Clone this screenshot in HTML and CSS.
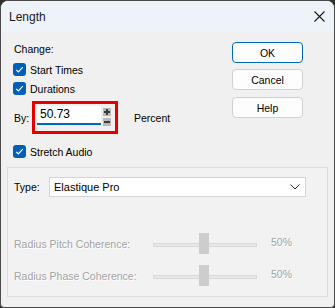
FILE: index.html
```html
<!DOCTYPE html>
<html lang="en">
<head>
  <meta charset="UTF-8">
  <title>Length</title>
  <link rel="stylesheet" href="styles.css">
</head>
<body>
  <div class="window">
    <div class="titlebar">
      <span class="title">Length</span>
      <svg class="close" width="11" height="11" viewBox="0 0 11 11">
        <path d="M0.5 0.5 L10.5 10.5 M10.5 0.5 L0.5 10.5" stroke="#1a1a1a" stroke-width="1.1" fill="none"/>
      </svg>
    </div>

    <div class="top">
      <div class="left">
        <div class="heading">Change:</div>
        <label class="check">
          <svg class="box" width="13" height="13" viewBox="0 0 13 13">
            <rect width="13" height="13" rx="3" fill="#005fb8"/>
            <path d="M3.2 6.8 L5.4 9 L9.8 4.2" stroke="#fff" stroke-width="1.2" fill="none"/>
          </svg>
          Start Times
        </label>
        <label class="check">
          <svg class="box" width="13" height="13" viewBox="0 0 13 13">
            <rect width="13" height="13" rx="3" fill="#005fb8"/>
            <path d="M3.2 6.8 L5.4 9 L9.8 4.2" stroke="#fff" stroke-width="1.2" fill="none"/>
          </svg>
          Durations
        </label>
        <div class="by-row">
          <span class="by-label">By:</span>
          <div class="highlight">
            <div class="num-input">50.73</div>
            <div class="spin">
              <span class="spin-btn">
                <svg width="8" height="8" viewBox="0 0 8 8"><path d="M4 1 V7 M1 4 H7" stroke="#3a3a3a" stroke-width="2"/></svg>
              </span>
              <span class="spin-btn">
                <svg width="8" height="8" viewBox="0 0 8 8"><path d="M1 4 H7" stroke="#3a3a3a" stroke-width="2"/></svg>
              </span>
            </div>
          </div>
          <span class="unit">Percent</span>
        </div>
        <label class="check stretch">
          <svg class="box" width="13" height="13" viewBox="0 0 13 13">
            <rect width="13" height="13" rx="3" fill="#005fb8"/>
            <path d="M3.2 6.8 L5.4 9 L9.8 4.2" stroke="#fff" stroke-width="1.2" fill="none"/>
          </svg>
          Stretch Audio
        </label>
      </div>
      <div class="buttons">
        <button class="btn default">OK</button>
        <button class="btn">Cancel</button>
        <button class="btn help">Help</button>
      </div>
    </div>

    <div class="group">
      <div class="type-row">
        <span class="type-label">Type:</span>
        <div class="select">
          <span>Elastique Pro</span>
          <svg width="10" height="6" viewBox="0 0 10 6"><path d="M0.5 0.5 L5 5 L9.5 0.5" stroke="#333" stroke-width="1" fill="none"/></svg>
        </div>
      </div>
      <div class="slider-row first">
        <span class="slider-label">Radius Pitch Coherence:</span>
        <div class="slider">
          <div class="track"></div>
          <div class="thumb"></div>
        </div>
        <span class="slider-value">50%</span>
      </div>
      <div class="slider-row">
        <span class="slider-label">Radius Phase Coherence:</span>
        <div class="slider">
          <div class="track"></div>
          <div class="thumb"></div>
        </div>
        <span class="slider-value">50%</span>
      </div>
    </div>
  </div>
</body>
</html>
```

FILE: styles.css
```css
body {
  margin: 0;
  background: #2e2e2e;
  font-family: "Liberation Sans", Arial, sans-serif;
  font-size: 10.5px;
  color: #000;
}
.window {
  box-sizing: border-box;
  width: 335px;
  height: 308px;
  border: 1px solid #4a4a4a;
  border-radius: 8px 8px 4px 4px;
  background: #f0f0f0;
  overflow: hidden;
}
.titlebar {
  height: 30px;
  background: #edf3f8;
  display: flex;
  align-items: center;
  justify-content: space-between;
  padding: 0 9px 0 8px;
}
.title {
  font-size: 12px;
  color: #1a1a1a;
  margin-top: 1px;
}
.close {
  margin-top: 0;
}
.top {
  display: flex;
}
.left {
  flex: 1;
  padding-left: 12px;
}
.heading {
  margin-top: 10px;
  padding-left: 1px;
  line-height: 16px;
}
.check {
  display: flex;
  align-items: center;
  gap: 4px;
  height: 13px;
  margin-top: 6px;
}
.check.stretch {
  margin-top: 11px;
}
.by-row {
  display: flex;
  align-items: center;
  margin-top: 6px;
}
.by-label {
  width: 18px;
  padding-left: 1px;
}
.highlight {
  box-sizing: border-box;
  width: 86px;
  height: 33px;
  border: 3px solid #e60000;
  display: flex;
  align-items: flex-start;
  padding: 2px 0 0 2px;
}
.num-input {
  box-sizing: border-box;
  width: 64px;
  height: 19px;
  background: #fff;
  border-bottom: 2px solid #0067c0;
  font-size: 12px;
  line-height: 17px;
  padding-left: 3px;
}
.spin {
  display: flex;
  flex-direction: column;
  gap: 2px;
  margin: 2px 0 0 2px;
}
.spin-btn {
  width: 8px;
  height: 8px;
  background: #b9b9b9;
  display: flex;
}
.unit {
  margin-left: 16px;
}
.buttons {
  display: flex;
  flex-direction: column;
  gap: 6px;
  margin: 11px 31px 0 0;
}
.btn {
  width: 71px;
  height: 21px;
  padding: 0;
  background: #fdfdfd;
  border: 1px solid #d0d0d0;
  border-radius: 4px;
  font-family: "Liberation Sans", Arial, sans-serif;
  font-size: 10.5px;
  color: #000;
}
.btn.default {
  border-color: #0067c0;
}
.btn.help {
  margin-top: 1px;
}
.group {
  box-sizing: border-box;
  height: 130px;
  margin: 9px 6px 0 6px;
  border: 1px solid #dcdcdc;
  background: #f2f2f2;
  padding: 9px 0 0 6px;
}
.type-row {
  display: flex;
  align-items: center;
}
.type-label {
  width: 35px;
}
.select {
  box-sizing: border-box;
  width: 257px;
  height: 20px;
  background: #fff;
  border: 1px solid #d5d5d5;
  display: flex;
  align-items: center;
  justify-content: space-between;
  padding: 0 5px 0 4px;
  font-size: 11px;
}
.slider-row {
  display: flex;
  align-items: center;
  height: 21px;
  margin-top: 11px;
  color: #a3a3a3;
  text-shadow: 1px 1px 0 #fff;
}
.slider-row.first {
  margin-top: 36px;
}
.slider-label {
  width: 139px;
}
.slider {
  position: relative;
  width: 104px;
  height: 21px;
  display: flex;
  align-items: center;
}
.track {
  box-sizing: border-box;
  width: 104px;
  height: 4px;
  margin-top: 2px;
  border: 1px solid #d8d8d8;
  background: #e8e8e8;
}
.thumb {
  position: absolute;
  left: 46px;
  top: 0;
  width: 10px;
  height: 21px;
  background: #cdcdcd;
}
.slider-value {
  margin-left: 14px;
  margin-top: -3px;
}
```
